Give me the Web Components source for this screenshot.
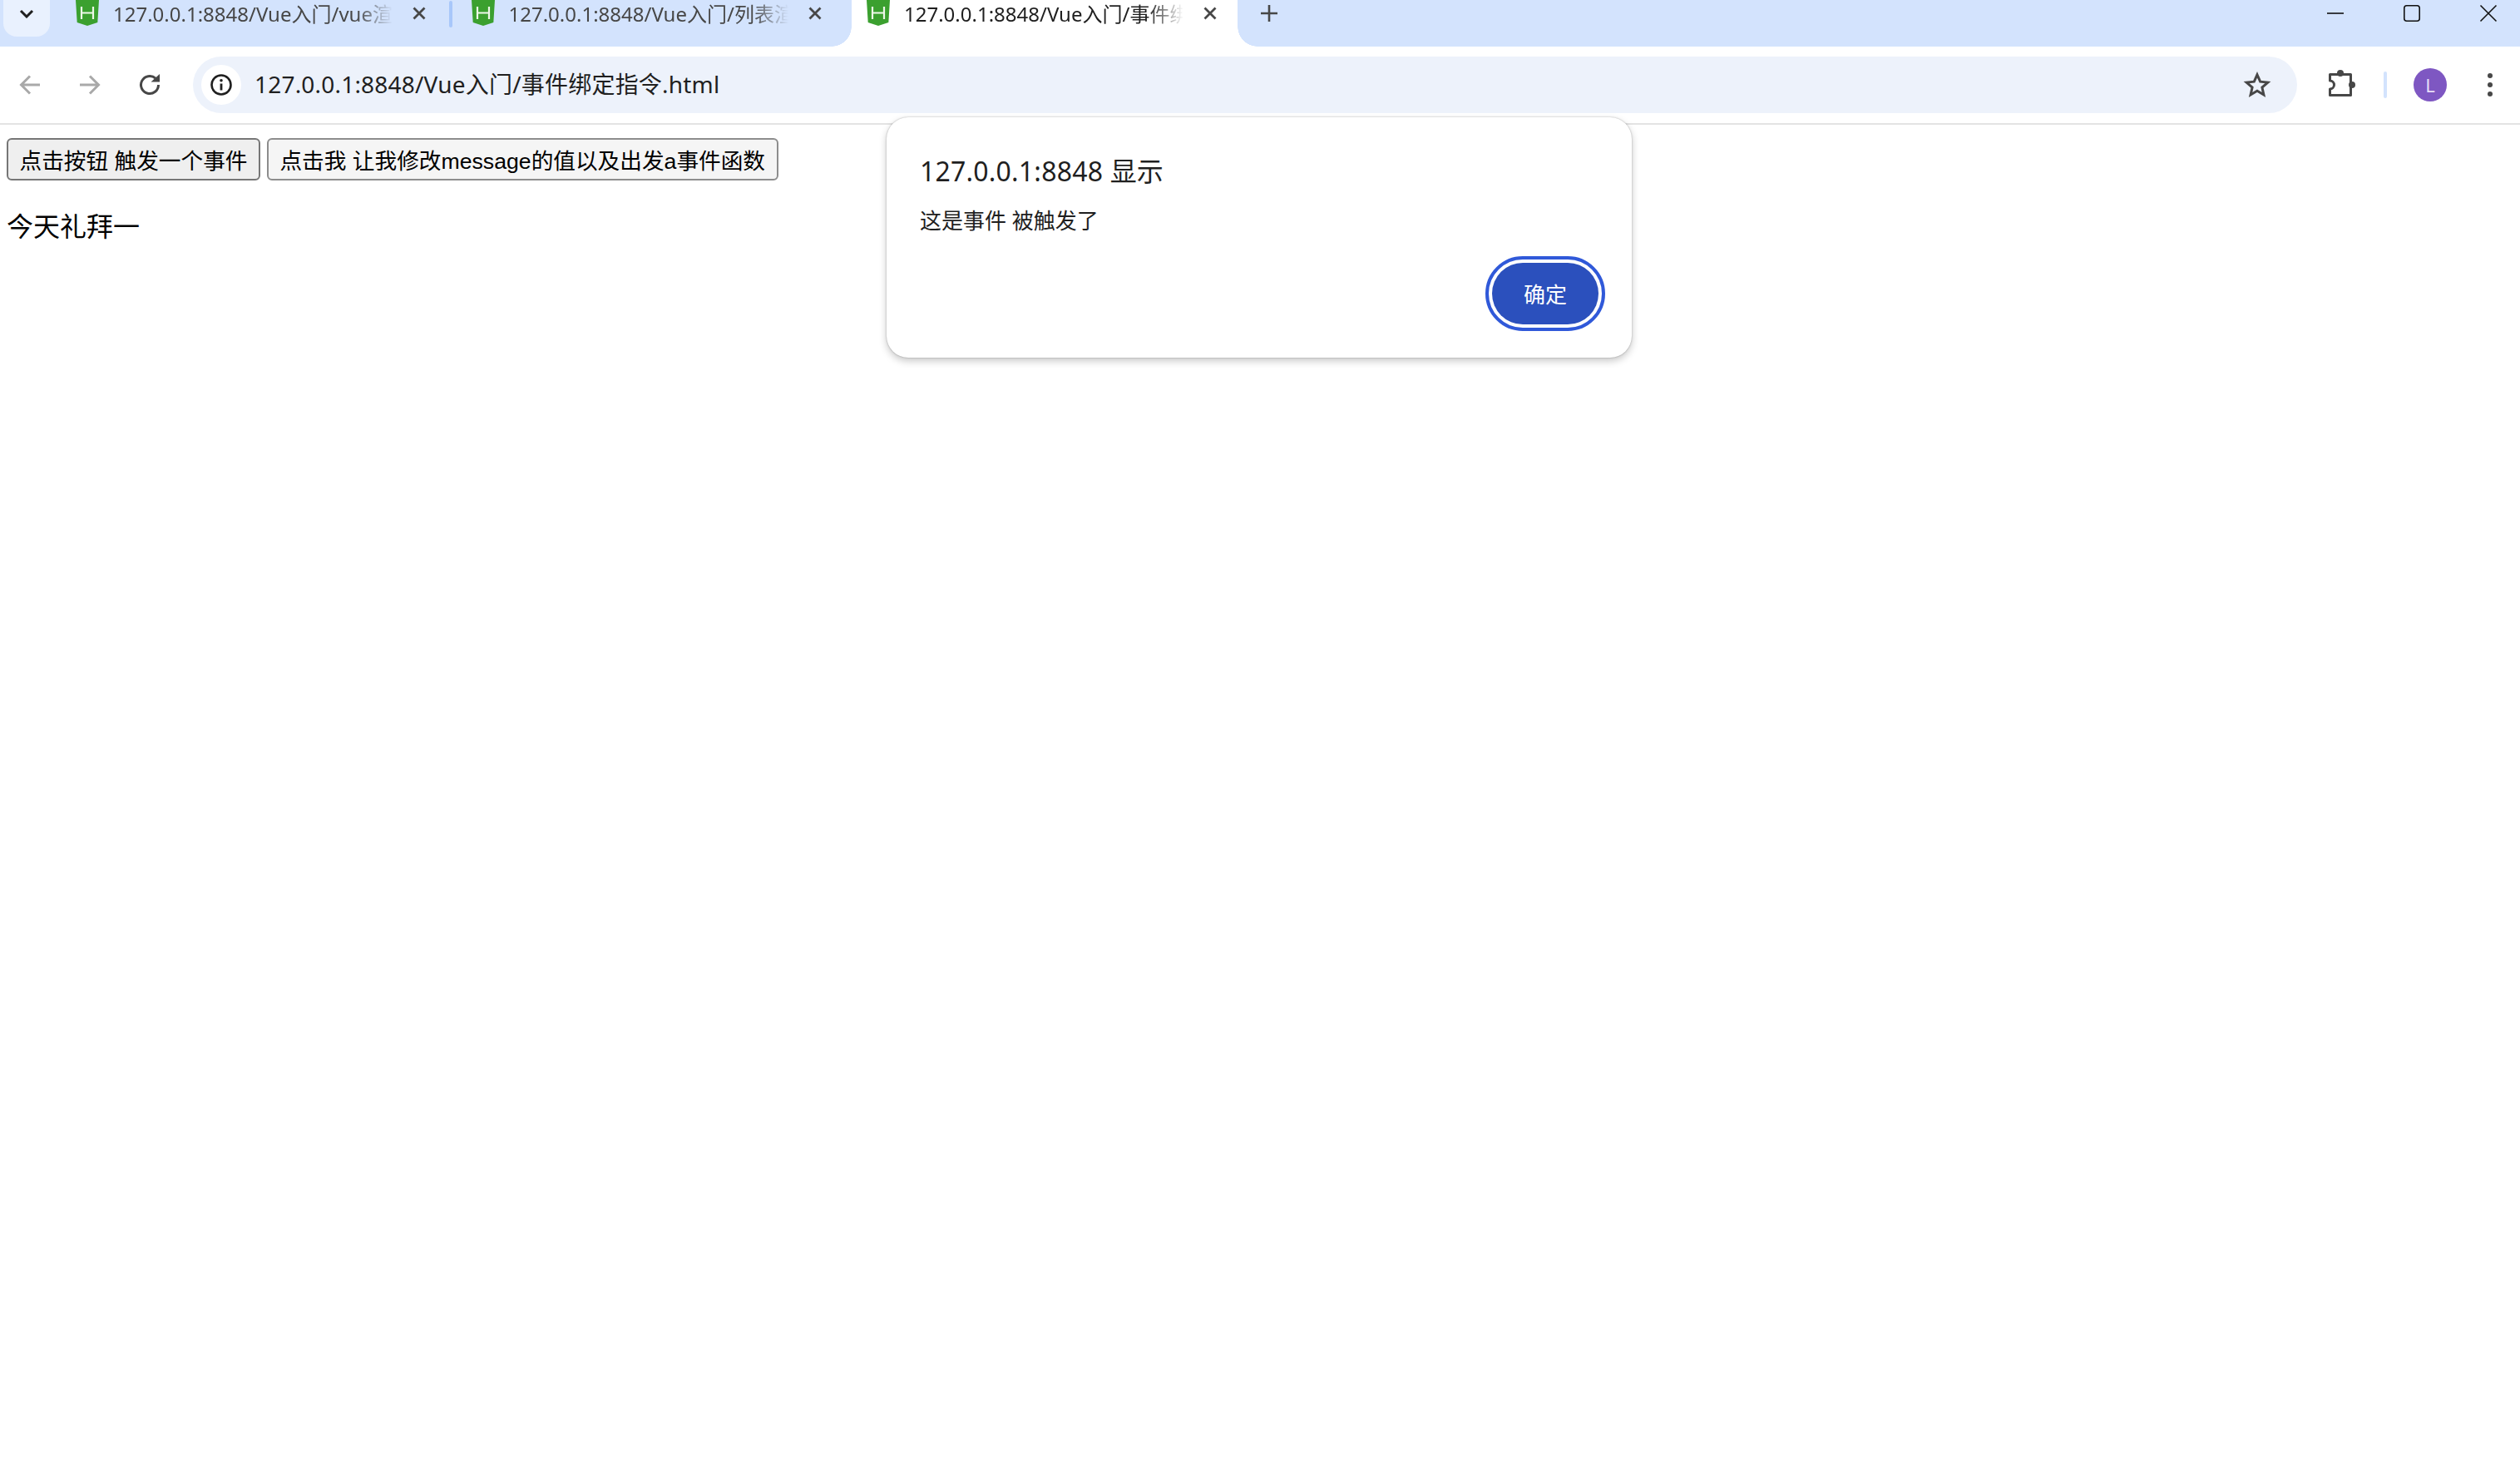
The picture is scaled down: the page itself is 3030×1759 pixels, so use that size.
<!DOCTYPE html>
<html lang="zh">
<head>
<meta charset="utf-8">
<title>事件绑定指令</title>
<style>
    html, body { margin: 0; height: 100%; background: #fff; }
    body { font-family: "Noto Sans", "Noto Sans CJK SC", sans-serif; overflow: hidden; }
</style>
</head>
<body>
<browser-window>
    <browser-tab slot="tabs" title-text="127.0.0.1:8848/Vue入门/vue渲染" divider></browser-tab>
    <browser-tab slot="tabs" title-text="127.0.0.1:8848/Vue入门/列表渲染"></browser-tab>
    <browser-tab slot="tabs" title-text="127.0.0.1:8848/Vue入门/事件绑定指令" active></browser-tab>
    <nav-toolbar slot="toolbar" url="127.0.0.1:8848/Vue入门/事件绑定指令.html"></nav-toolbar>
    <demo-page></demo-page>
    <alert-dialog heading="127.0.0.1:8848 显示" message="这是事件 被触发了" confirm="确定"></alert-dialog>
</browser-window>

<script>
const windowTemplate = document.createElement('template');
windowTemplate.innerHTML = `
    <style>
        :host { display: block; position: relative; height: 1759px; overflow: hidden; }
        .strip {
            display: flex;
            height: 56px;
            background: #d3e3fd;
        }
        .tab-search {
            width: 56px;
            height: 44px;
            margin-left: 4px;
            border-radius: 0 0 16px 16px;
            background: #e9f1fe;
            display: flex;
            justify-content: center;
            padding-top: 11px;
            box-sizing: border-box;
            flex: none;
        }
        .tabs { display: flex; margin-left: 13px; }
        .new-tab {
            width: 80px;
            height: 32px;
            margin-left: -14px;
            display: flex;
            align-items: center;
            justify-content: center;
            flex: none;
        }
        .spacer { flex: 1; }
        .controls { display: flex; height: 32px; margin-right: -8px; }
        .controls div { width: 92px; display: flex; align-items: center; justify-content: center; }
    </style>
    <div class="strip">
        <div class="tab-search">
            <svg width="18" height="11" viewBox="0 0 18 11"><path d="M2 2l7 7 7-7" fill="none" stroke="#1f1f1f" stroke-width="3"/></svg>
        </div>
        <div class="tabs"><slot name="tabs"></slot></div>
        <div class="new-tab">
            <svg width="22" height="22" viewBox="0 0 22 22"><path d="M11 1v20M1 11h20" stroke="#474747" stroke-width="2.6"/></svg>
        </div>
        <div class="spacer"></div>
        <div class="controls">
            <div><svg width="22" height="22" viewBox="0 0 22 22"><path d="M1 11h20" stroke="#111" stroke-width="1.6"/></svg></div>
            <div><svg width="22" height="22" viewBox="0 0 22 22"><rect x="1.800" y="1.800" width="18.400" height="18.400" rx="3" fill="none" stroke="#111" stroke-width="1.6"/></svg></div>
            <div><svg width="22" height="22" viewBox="0 0 22 22"><path d="M1.500 1.500l19 19M20.500 1.500l-19 19" stroke="#111" stroke-width="1.6"/></svg></div>
        </div>
    </div>
    <slot name="toolbar"></slot>
    <slot></slot>
`;
class BrowserWindow extends HTMLElement {
    constructor() {
        super();
        this.attachShadow({mode: 'open'});
        this.shadowRoot.appendChild(windowTemplate.content.cloneNode(true));
    }
}

const tabTemplate = document.createElement('template');
tabTemplate.innerHTML = `
    <style>
        :host {
            display: block;
            position: relative;
            width: 463.500px;
            height: 56px;
            margin-right: 12px;
            color: #474747;
            font-size: 24px;
        }
        :host([active]) { background: #fff; color: #1f1f1f; }
        :host([active])::before, :host([active])::after {
            content: '';
            position: absolute;
            bottom: 0;
            width: 24px;
            height: 24px;
        }
        :host([active])::before { left: -24px; background: radial-gradient(circle at 0 0, transparent 23.5px, #fff 24px); }
        :host([active])::after { right: -24px; background: radial-gradient(circle at 100% 0, transparent 23.5px, #fff 24px); }
        .row {
            display: flex;
            align-items: center;
            height: 32px;
            padding-left: 18px;
        }
        svg.fav { flex: none; }
        .title {
            width: 336px;
            margin-left: 17px;
            padding-bottom: 2px;
            white-space: nowrap;
            overflow: hidden;
            -webkit-mask-image: linear-gradient(90deg, #000 87%, transparent 100%);
            mask-image: linear-gradient(90deg, #000 87%, transparent 100%);
        }
        .close { margin-left: 24px; flex: none; }
        .sep { display: none; }
        :host([divider]) .sep {
            display: block;
            position: absolute;
            right: -7px;
            top: 1px;
            width: 4px;
            height: 32px;
            border-radius: 2px;
            background: #a8c7fa;
        }
    </style>
    <div class="row">
        <svg class="fav" width="28" height="32" viewBox="0 0 28 32">
            <path d="M0 0h28l-1.700 27L14 31 1.700 27z" fill="#3ba02f"/>
            <path d="M7 8v15M21 8v15M7 15.500h14" fill="none" stroke="#eef7e9" stroke-width="2.200"/>
        </svg>
        <div class="title"></div>
        <svg class="close" width="16" height="16" viewBox="0 0 16 16"><path d="M1.500 1.500l13 13M14.500 1.500l-13 13" stroke="#474747" stroke-width="2.800"/></svg>
    </div>
    <div class="sep"></div>
`;
class BrowserTab extends HTMLElement {
    constructor() {
        super();
        this.attachShadow({mode: 'open'});
        this.shadowRoot.appendChild(tabTemplate.content.cloneNode(true));
        this.shadowRoot.querySelector('.title').textContent = this.getAttribute('title-text');
    }
}

const toolbarTemplate = document.createElement('template');
toolbarTemplate.innerHTML = `
    <style>
        :host {
            display: flex;
            align-items: center;
            height: 92px;
            background: #fff;
            border-bottom: 2px solid #e3e3e3;
            border-radius: 16px 16px 0 0;
        }
        .btn { width: 72px; display: flex; justify-content: center; align-items: center; flex: none; }
        .omnibox {
            flex: 1;
            height: 68px;
            margin-left: 16px;
            border-radius: 34px;
            background: #edf2fb;
            display: flex;
            align-items: center;
            padding-left: 10px;
            padding-right: 32px;
        }
        .info {
            width: 48px;
            height: 48px;
            border-radius: 50%;
            background: #fff;
            display: flex;
            align-items: center;
            justify-content: center;
            flex: none;
        }
        .url {
            flex: 1;
            margin-left: 16px;
            padding-bottom: 4px;
            font-size: 28px;
            letter-spacing: .2px;
            color: #1f1f1f;
            white-space: nowrap;
        }
        .bar { width: 4px; height: 32px; border-radius: 2px; background: #d3e3fd; margin: 0 16px 0 14px; flex: none; }
        .puzzle { margin-left: 18px; }
        svg { overflow: visible; }
        .avatar {
            width: 40px;
            height: 40px;
            border-radius: 50%;
            background: #7e57c2;
            color: #e8def8;
            font-size: 22px;
            display: flex;
            align-items: center;
            justify-content: center;
        }
    </style>
    <div class="btn"><svg width="26" height="26" viewBox="0 0 26 26"><path d="M25 13H3M13 2.500L2.500 13 13 23.500" fill="none" stroke="#a9a9a9" stroke-width="3"/></svg></div>
    <div class="btn"><svg width="26" height="26" viewBox="0 0 26 26"><path d="M1 13h22M13 2.500L23.500 13 13 23.500" fill="none" stroke="#a9a9a9" stroke-width="3"/></svg></div>
    <div class="btn"><svg width="28" height="28" viewBox="0 0 28 28"><path d="M24.500 14A10.500 10.500 0 1 1 21 6.200" fill="none" stroke="#474747" stroke-width="3"/><path d="M15.500 10.500h10.500V1z" fill="#474747"/></svg></div>
    <div class="omnibox">
        <div class="info"><svg width="28" height="28" viewBox="0 0 28 28"><circle cx="14" cy="14" r="11.500" fill="none" stroke="#1f1f1f" stroke-width="2.600"/><path d="M14 12.500v8" stroke="#1f1f1f" stroke-width="2.800"/><circle cx="14" cy="8.800" r="1.800" fill="#1f1f1f"/></svg></div>
        <div class="url"></div>
        <svg width="32" height="32" viewBox="0 0 32 32"><path d="M16 3.800l3.700 8.400 9.100.9-6.900 6 2 8.900-7.900-4.700-7.900 4.700 2-8.900-6.900-6 9.100-.9z" fill="none" stroke="#474747" stroke-width="3"/></svg>
    </div>
    <div class="btn puzzle"><svg width="34" height="34" viewBox="0 0 34 34"><path d="M2.500 4.500h25v25h-25v-7.500a5 5 0 0 0 0-10z" fill="none" stroke="#474747" stroke-width="3" stroke-linejoin="round"/><circle cx="15" cy="3" r="4" fill="#474747"/><circle cx="29" cy="17" r="4" fill="#474747"/></svg></div>
    <div class="bar"></div>
    <div class="btn"><div class="avatar">L</div></div>
    <div class="btn"><svg width="8" height="30" viewBox="0 0 8 30"><circle cx="4" cy="4" r="3" fill="#474747"/><circle cx="4" cy="15" r="3" fill="#474747"/><circle cx="4" cy="26" r="3" fill="#474747"/></svg></div>
`;
class NavToolbar extends HTMLElement {
    constructor() {
        super();
        this.attachShadow({mode: 'open'});
        this.shadowRoot.appendChild(toolbarTemplate.content.cloneNode(true));
        this.shadowRoot.querySelector('.url').textContent = this.getAttribute('url');
    }
}

const pageTemplate = document.createElement('template');
pageTemplate.innerHTML = `
    <style>
        :host { display: block; padding: 16px 8px 0; color: #000; }
        .buttons { display: flex; gap: 8px; }
        button {
            height: 51px;
            padding: 0 13.500px;
            font: 26.670px "Liberation Sans", "Noto Sans CJK SC", sans-serif;
            color: #000;
            background: #efefef;
            border: 2px solid #767676;
            border-radius: 6px;
            white-space: nowrap;
        }
        /* second one is hovered in the shot */
        button.hover { background: #f5f5f5; border-color: #8d8d8d; }
        p { margin: 36px 0 0; font: 32px/40px "Liberation Sans", "Noto Sans CJK SC", sans-serif; }
    </style>
    <div class="buttons">
        <button>点击按钮 触发一个事件</button>
        <button class="hover">点击我 让我修改message的值以及出发a事件函数</button>
    </div>
    <p>今天礼拜一</p>
`;
class DemoPage extends HTMLElement {
    constructor() {
        super();
        this.attachShadow({mode: 'open'});
        this.shadowRoot.appendChild(pageTemplate.content.cloneNode(true));
    }
}

const dialogTemplate = document.createElement('template');
dialogTemplate.innerHTML = `
    <style>
        :host {
            display: block;
            position: absolute;
            left: 1066px;
            top: 141px;
            width: 896px;
            height: 289px;
            box-sizing: border-box;
            padding: 40px 32px 0 40px;
            background: #fff;
            border-radius: 26px;
            box-shadow: 0 0 2px rgba(0,0,0,.3), 0 4px 10px rgba(0,0,0,.22);
            color: #1f1f1f;
        }
        h2 { margin: 0; font-size: 32px; line-height: 50px; font-weight: 400; letter-spacing: .2px; }
        .msg { margin-top: 16px; font-size: 26px; line-height: 36px; }
        .actions { display: flex; justify-content: flex-end; margin-top: 33px; padding-right: 8px; }
        button {
            width: 128px;
            height: 74px;
            border: 0;
            border-radius: 37px;
            background: #2b50bd;
            color: #fff;
            font: 26px "Noto Sans", "Noto Sans CJK SC", sans-serif;
            outline: 4px solid #3059d9;
            outline-offset: 4px;
            padding: 0;
        }
    </style>
    <h2></h2>
    <div class="msg"></div>
    <div class="actions"><button></button></div>
`;
class AlertDialog extends HTMLElement {
    constructor() {
        super();
        this.attachShadow({mode: 'open'});
        this.shadowRoot.appendChild(dialogTemplate.content.cloneNode(true));
        this.shadowRoot.querySelector('h2').textContent = this.getAttribute('heading');
        this.shadowRoot.querySelector('.msg').textContent = this.getAttribute('message');
        this.shadowRoot.querySelector('button').textContent = this.getAttribute('confirm');
    }
}

customElements.define('browser-window', BrowserWindow);
customElements.define('browser-tab', BrowserTab);
customElements.define('nav-toolbar', NavToolbar);
customElements.define('demo-page', DemoPage);
customElements.define('alert-dialog', AlertDialog);
</script>
</body>
</html>
